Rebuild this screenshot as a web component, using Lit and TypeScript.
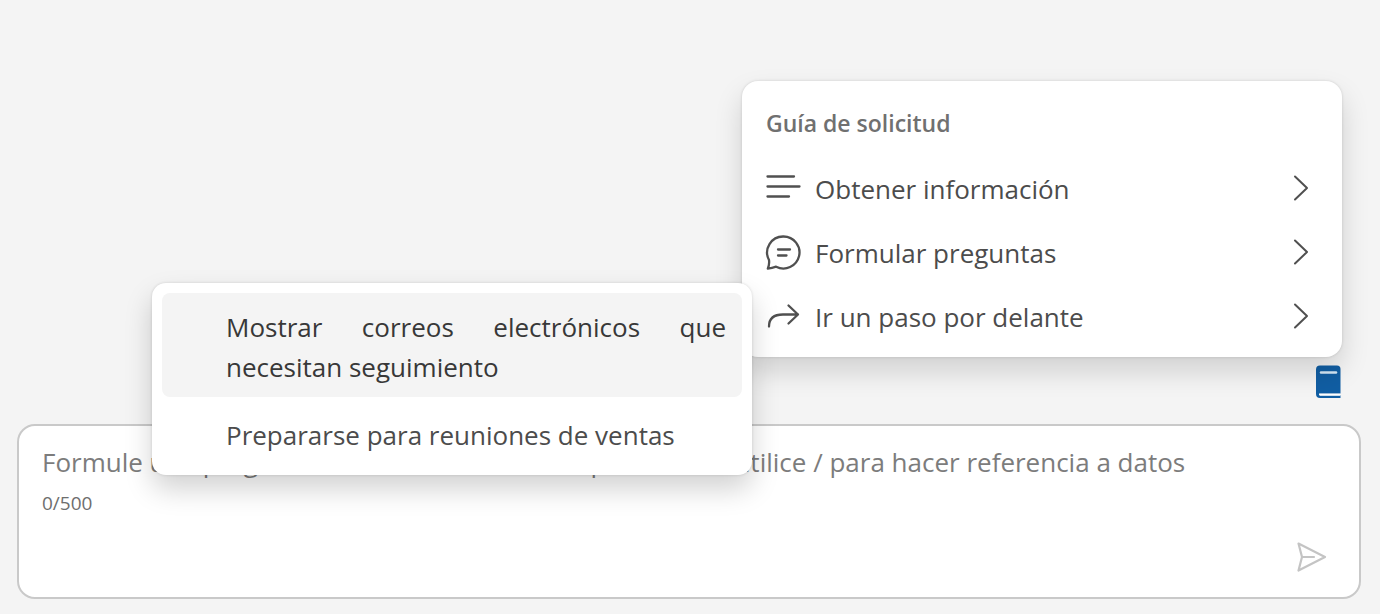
import { LitElement, html, css, svg } from "lit";
import { customElement } from "lit/decorators.js";

const listIcon = svg`<path d="M1.5 4.500H28M1.5 14.500H33.500M1.5 24.500H23" />`;
const chatIcon = svg`<path d="M17.500 0.500A16 16 0 1 1 10.1 30.700Q6 32.200 1.800 32.600Q3.600 28.500 3 24A16 16 0 0 1 17.500 0.500Z" /><path d="M12 13.500h12M12 19.500h8.500" />`;
const arrowIcon = svg`<path d="M3 26.500C3 18 9 14.500 17 14.500H32M22.500 5.500L32 14.500L22.500 23.500" />`;

const topics = [
  { label: "Obtener información", icon: listIcon },
  { label: "Formular preguntas", icon: chatIcon },
  { label: "Ir un paso por delante", icon: arrowIcon },
];

const prompts = [
  "Mostrar correos electrónicos que necesitan seguimiento",
  "Prepararse para reuniones de ventas",
];

@customElement("prompt-guide")
export class PromptGuide extends LitElement {
  static styles = css`
    :host {
      display: block;
      position: relative;
      box-sizing: border-box;
      width: 600px;
      max-width: 100%;
      padding: 24px 24px 8px;
      border-radius: 16px;
      background: #fff;
      box-shadow: 0 0 3px rgba(0, 0, 0, 0.14), 0 14px 28px rgba(0, 0, 0, 0.15);
    }
    h2 {
      margin: 0 0 16px;
      font-size: 23px;
      line-height: 36px;
      font-weight: 600;
      color: #707070;
    }
    button {
      border: 0;
      margin: 0;
      background: none;
      font: inherit;
      color: #4c4c4c;
      cursor: pointer;
    }
    .topic {
      display: flex;
      align-items: center;
      gap: 14px;
      width: 100%;
      height: 64px;
      padding: 0;
      text-align: left;
    }
    .topic span {
      flex: 1;
    }
    svg {
      fill: none;
      stroke: #505050;
      stroke-width: 2.3;
      stroke-linecap: round;
      stroke-linejoin: round;
    }
    .icon {
      width: 35px;
      height: 35px;
      overflow: visible;
    }
    .chevron {
      width: 35px;
      height: 35px;
      stroke-width: 2;
    }
    .submenu {
      position: absolute;
      top: 202px;
      right: calc(100% - 10px);
      box-sizing: border-box;
      width: 600px;
      padding: 10px 10px 6px;
      border-radius: 14px;
      background: #fff;
      box-shadow: 0 0 3px rgba(0, 0, 0, 0.14), 0 14px 28px rgba(0, 0, 0, 0.18);
    }
    .prompt {
      display: block;
      width: 100%;
      padding: 14px 16px 10px 64px;
      border-radius: 8px;
      line-height: 40px;
      text-align: justify;
    }
    .prompt + .prompt {
      padding: 18px 16px 14px 64px;
    }
    .active {
      background: #f4f4f4;
      color: #383838;
    }
  `;

  render() {
    return html`
      <h2>Guía de solicitud</h2>
      <nav>
        ${topics.map(
          (t) => html`<button class="topic">
            <svg class="icon" viewBox="0 0 35 35" aria-hidden="true">${t.icon}</svg>
            <span>${t.label}</span>
            <svg class="chevron" viewBox="0 0 35 35" aria-hidden="true">
              <path d="M12 4.500L24 16L12 27.500" />
            </svg>
          </button>`
        )}
      </nav>
      <div class="submenu">
        ${prompts.map(
          (p, i) => html`<button class="prompt ${i === 0 ? "active" : ""}">${p}</button>`
        )}
      </div>
    `;
  }
}

@customElement("app-root")
export class AppRoot extends LitElement {
  static styles = css`
    :host {
      display: block;
      box-sizing: border-box;
      min-height: 100vh;
      padding: 81px 19px 15px 17px;
      background: #f4f4f4;
      font: 26px/40px "Segoe UI", "Open Sans", "Noto Sans", sans-serif;
      overflow: hidden;
    }
    .tools {
      display: flex;
      flex-direction: column;
      align-items: flex-end;
      gap: 8px;
      padding-right: 19px;
    }
    prompt-guide {
      z-index: 1;
    }
    button {
      display: block;
      padding: 0;
      border: 0;
      background: none;
      cursor: pointer;
    }
    svg {
      display: block;
    }
    .book {
      width: 27px;
      height: 34px;
    }
    .composer {
      display: flex;
      flex-direction: column;
      margin-top: 25px;
      padding: 15px 23px 24px;
      border: 2px solid #c9c9c9;
      border-radius: 18px;
      background: #fff;
    }
    input {
      width: 100%;
      height: 42px;
      padding: 0;
      border: 0;
      outline: 0;
      background: none;
      font: inherit;
      color: #383838;
    }
    input::placeholder {
      color: #7c7c7c;
      opacity: 1;
    }
    .count {
      font-size: 19px;
      line-height: 40px;
      color: #6e6e6e;
    }
    .send {
      align-self: flex-end;
      margin: 18px 8px 0 0;
    }
    .send svg {
      width: 32px;
      height: 32px;
    }
  `;

  render() {
    return html`
      <div class="tools">
        <prompt-guide></prompt-guide>
        <button aria-label="Guía de solicitud">
          <svg class="book" viewBox="0 0 27 34">
            <path d="M5 0.500H22Q25.500 0.500 25.500 4V28.500H4V30H25.500V33H5Q1 33 1 29V4.500Q1 0.500 5 0.500Z" fill="#115ea3" />
            <path d="M4.500 29.800H25.500" stroke="#fff" stroke-width="2" />
            <path d="M6 7.500H21" stroke="#d5e8f6" stroke-width="2.500" stroke-linecap="round" />
          </svg>
        </button>
      </div>
      <form class="composer" @submit=${(e: Event) => e.preventDefault()}>
        <input
          id="question"
          aria-label="Solicitud"
          maxlength="500"
          placeholder="Formule una pregunta o realice una solicitud por escrito, utilice / para hacer referencia a datos"
        />
        <label class="count" for="question">0/500</label>
        <button class="send" aria-label="Enviar">
          <svg viewBox="0 0 32 32" fill="none" stroke="#c4c4c4" stroke-width="2.200" stroke-linejoin="round" stroke-linecap="round">
            <path d="M2.500 2.500L29 16L2.500 29.500L6 16ZM6 16H18" />
          </svg>
        </button>
      </form>
    `;
  }
}
